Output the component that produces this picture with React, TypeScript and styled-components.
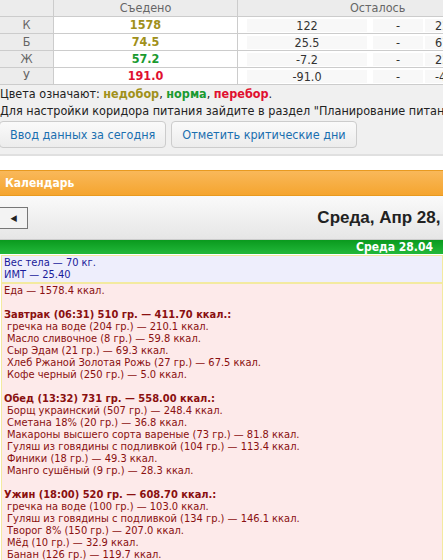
import React from "react";
import styled, { createGlobalStyle } from "styled-components";

const G = createGlobalStyle`
  body { margin:0; background:#fff; font-family:"DejaVu Sans Condensed", "Liberation Sans", sans-serif; font-size:11px; overflow:hidden; }
  #root { width:443px; height:560px; overflow:hidden; }
`;
const Page = styled.div`width:443px; overflow:hidden;`;
const Top = styled.div`background:#f0f0f0; border-bottom:2px solid #e0e0e0; padding-bottom:6px;`;
const Table = styled.div`display:grid; grid-template-columns:54px 184px 460px; width:700px; background:#fff;`;
const Cell = styled.div<{ $head?: boolean; $first?: boolean; $c?: string }>`
  height:16px; line-height:16px; text-align:center; font-size:12.5px;
  border-right:1px solid #ccc; border-bottom:1px solid #ccc;
  background:${p => (p.$head || p.$first ? "#ececec" : "#fff")};
  color:${p => p.$c || "#666"};
  font-weight:${p => (p.$c ? "bold" : "normal")};
`;
const Sub = styled.div`height:16px; border-bottom:1px solid #ccc; background:#fff; display:grid; grid-template-columns:9px 120px 6px 50px 2px 100px; align-items:center;`;
const SubV = styled.div<{ $bg?: boolean }>`text-align:center; font-size:12.5px; color:#333; background:${p => (p.$bg ? "#f8f8f8" : "transparent")}; height:13px; line-height:13px; white-space:nowrap;`;
const Note = styled.div`font-size:12.5px; line-height:16px; color:#222; padding-top:1px; white-space:nowrap;`;
const Col = styled.span<{ $c: string }>`color:${p => p.$c}; font-weight:bold;`;
const Btns = styled.div`display:flex; gap:6px; margin-top:2px;`;
const Btn = styled.div`height:25px; line-height:25px; padding:0 10px; font-size:12.5px; color:#1a6fb0; background:linear-gradient(#fafafa,#ececec); border:1px solid #ccc; border-radius:4px; margin-left:-1px; white-space:nowrap;`;
const Gap = styled.div`height:14px; background:#fff;`;
const Orange = styled.div`height:24px; line-height:24px; background:linear-gradient(#f9b85a,#f5a52f); border-top:1px solid #e89a20; border-bottom:1px solid #e89a20; color:#fff; font-weight:bold; font-size:12px; padding-left:5px;`;
const Nav = styled.div`height:43px; background:linear-gradient(#fafafa,#e6e6e6); border-bottom:1px solid #ccc; display:flex; align-items:center; justify-content:space-between;`;
const Prev = styled.div`width:27px; height:20px; border:1px solid #777; border-left:none; background:#f3f3f3; display:flex; align-items:center; justify-content:center; font-size:9px; color:#222;`;
const Title = styled.div`font-family:"Liberation Sans", Arial, sans-serif; font-weight:bold; font-size:17px; color:#222; white-space:nowrap; margin-right:-40px;`;
const Green = styled.div`height:14px; line-height:14px; background:linear-gradient(#0a9a1e,#22b83a); color:#fff; font-weight:bold; font-size:12px; text-align:right; padding-right:10px;`;
const Box = styled.div<{ $bg: string; $c: string }>`margin:1px 0 0 1px; background:${p => p.$bg}; color:${p => p.$c}; border:1px solid #f3eaa0; padding:1px 2px; line-height:12px; font-size:11px; white-space:pre;`;
const B = styled.div`font-weight:bold;`;
const L = styled.div`padding-left:3px;`;
const Sp = styled.div`height:12px;`;

const rows = [["К","1578","#a0901a","122","22"],["Б","74.5","#a0901a","25.5","67"],["Ж","57.2","#1a9a30","-7.2","22"],["У","191.0","#e01030","-91.0","-41"]];
const meals: [string, string[]][] = [
  ["Завтрак (06:31) 510 гр. — 411.70 ккал.:", ["гречка на воде (204 гр.) — 210.1 ккал.","Масло сливочное (8 гр.) — 59.8 ккал.","Сыр Эдам (21 гр.) — 69.3 ккал.","Хлеб Ржаной Золотая Рожь (27 гр.) — 67.5 ккал.","Кофе черный (250 гр.) — 5.0 ккал."]],
  ["Обед (13:32) 731 гр. — 558.00 ккал.:", ["Борщ украинский (507 гр.) — 248.4 ккал.","Сметана 18% (20 гр.) — 36.8 ккал.","Макароны высшего сорта вареные (73 гр.) — 81.8 ккал.","Гуляш из говядины с подливкой (104 гр.) — 113.4 ккал.","Финики (18 гр.) — 49.3 ккал.","Манго сушёный (9 гр.) — 28.3 ккал."]],
  ["Ужин (18:00) 520 гр. — 608.70 ккал.:", ["гречка на воде (100 гр.) — 103.0 ккал.","Гуляш из говядины с подливкой (134 гр.) — 146.1 ккал.","Творог 8% (150 гр.) — 207.0 ккал.","Мёд (10 гр.) — 32.9 ккал.","Банан (126 гр.) — 119.7 ккал."]],
];

export default function App() {
  return (
    <Page>
      <G />
      <Top>
        <Table>
          <Cell $head />
          <Cell $head>Съедено</Cell>
          <Cell $head style={{ textAlign: "left", paddingLeft: 112 }}>Осталось</Cell>
          {rows.map(r => (
            <React.Fragment key={r[0]}>
              <Cell $first>{r[0]}</Cell>
              <Cell $c={r[2]}>{r[1]}</Cell>
              <Sub>
                <span />
                <SubV $bg>{r[3]}</SubV>
                <span />
                <SubV $bg>-</SubV>
                <span />
                <SubV $bg style={{ textAlign: "left", paddingLeft: 10 }}>{r[4]}</SubV>
              </Sub>
            </React.Fragment>
          ))}
        </Table>
        <Note>Цвета означают: <Col $c="#a0901a">недобор</Col>, <Col $c="#1a9a30">норма</Col>, <Col $c="#e01030">перебор</Col>.</Note>
        <Note>Для настройки коридора питания зайдите в раздел "Планирование питания".</Note>
        <Btns>
          <Btn>Ввод данных за сегодня</Btn>
          <Btn>Отметить критические дни</Btn>
        </Btns>
      </Top>
      <Gap />
      <Orange>Календарь</Orange>
      <Nav>
        <Prev>◀</Prev>
        <Title>Среда, Апр 28, 2021</Title>
      </Nav>
      <Green>Среда 28.04</Green>
      <Box $bg="#eeeefc" $c="#1a1a9a">{"Вес тела — 70 кг.\nИМТ — 25.40"}</Box>
      <Box $bg="#fdeaea" $c="#8a1010" style={{ marginTop: 0, paddingBottom: 20 }}>
        <div>Еда — 1578.4 ккал.</div>
        {meals.map(([h, items]) => (
          <React.Fragment key={h}>
            <Sp />
            <B>{h}</B>
            {items.map(i => <L key={i}>{i}</L>)}
          </React.Fragment>
        ))}
      </Box>
    </Page>
  );
}
